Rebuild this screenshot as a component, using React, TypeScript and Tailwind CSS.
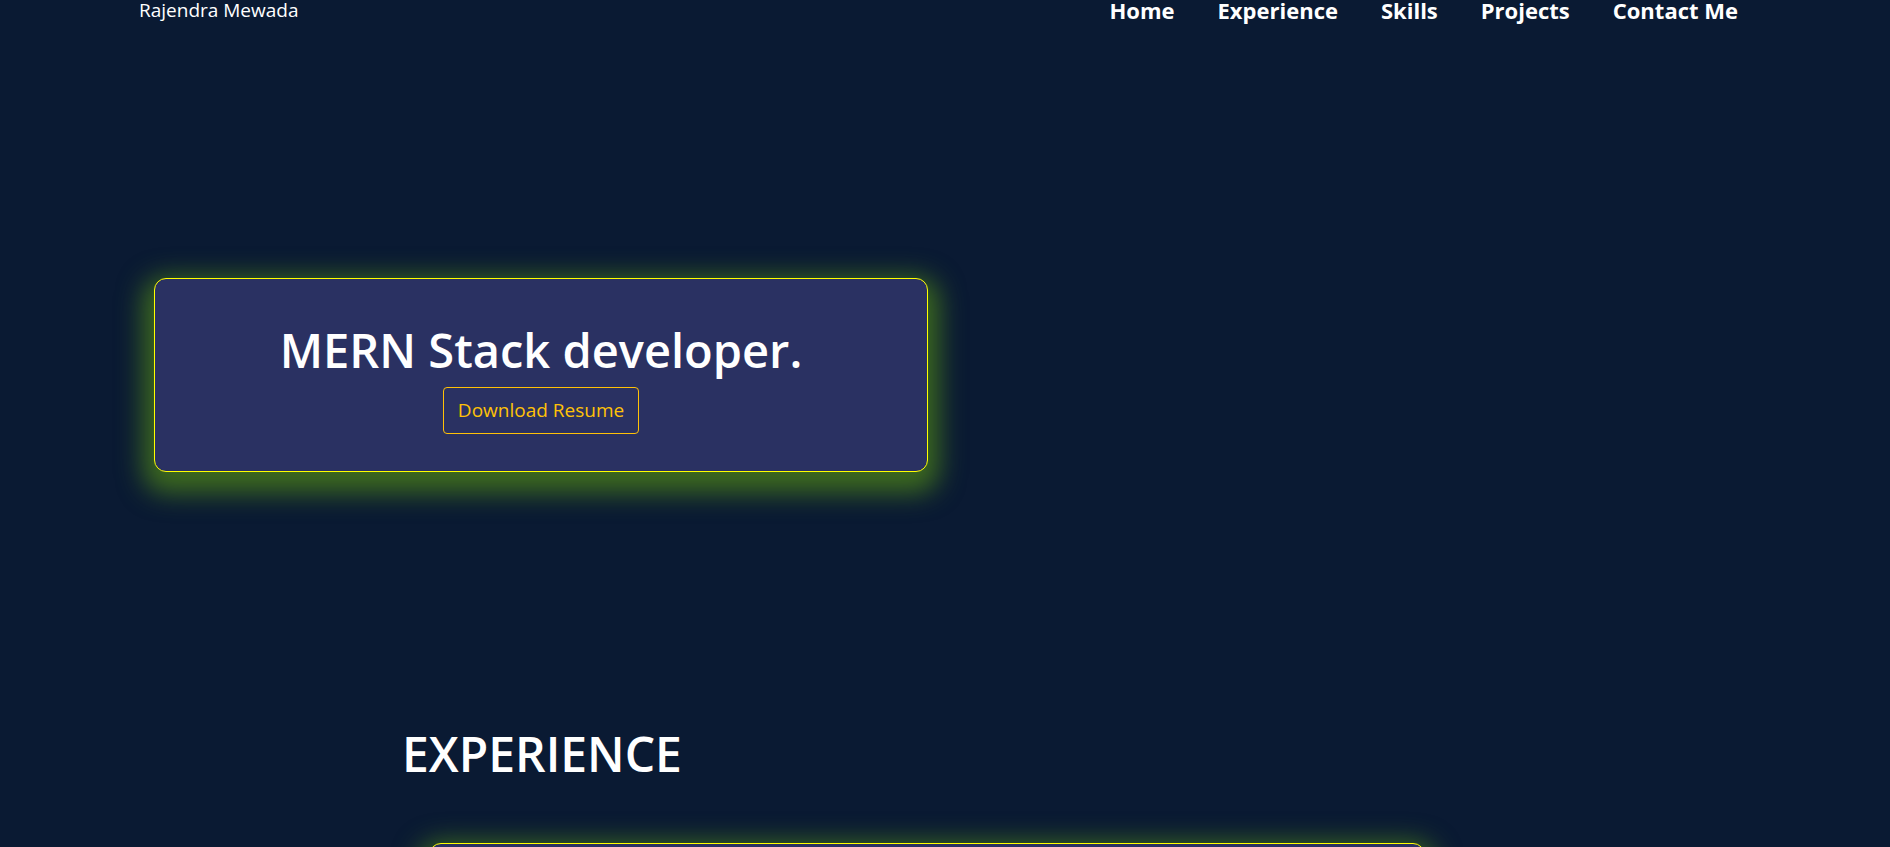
import React from 'react';

const links = ['Home', 'Experience', 'Skills', 'Projects', 'Contact Me'];

function Header() {
	return (
		<header className="flex h-[23px] items-start justify-between pl-[139px] pr-[152px] pt-px">
			<span className="text-[19px] leading-none text-white">Rajendra Mewada</span>
			<nav className="-mt-[2px] flex items-start gap-[43px]">
				{links.map((l) => (
					<a key={l} href="#" className="text-[22px] font-bold leading-none text-white">
						{l}
					</a>
				))}
			</nav>
		</header>
	);
}

function Hero() {
	return (
		<section className="pt-[255px] pl-[154px]">
			<div className="flex w-[774px] flex-col items-center rounded-xl border border-[#ffff00] bg-[#2a3162] pt-[48px] pb-[37px] shadow-[0_10px_26px_11px_#3d6a1f]">
				<h1 className="text-[47px] font-semibold leading-none text-white">MERN Stack developer.</h1>
				<button className="mt-[13px] h-[47px] rounded border border-[#ffc107] px-[14px] text-[19px] text-[#ffc107]">
					Download Resume
				</button>
			</div>
		</section>
	);
}

function Experience() {
	return (
		<section className="pt-[258px]">
			<h2 className="pl-[402px] text-[48px] font-semibold leading-none text-white">EXPERIENCE</h2>
			<div className="mt-[65px] ml-[429px] h-[300px] w-[996px] rounded-xl border border-[#ffff00] bg-[#2a3162] shadow-[0_10px_26px_11px_#3d6a1f]" />
		</section>
	);
}

export default function App() {
	return (
		<div className="h-[847px] w-full overflow-hidden bg-[#0a1a33]" style={{ fontFamily: '"Open Sans", "Noto Sans", sans-serif' }}>
			<Header />
			<Hero />
			<Experience />
		</div>
	);
}
